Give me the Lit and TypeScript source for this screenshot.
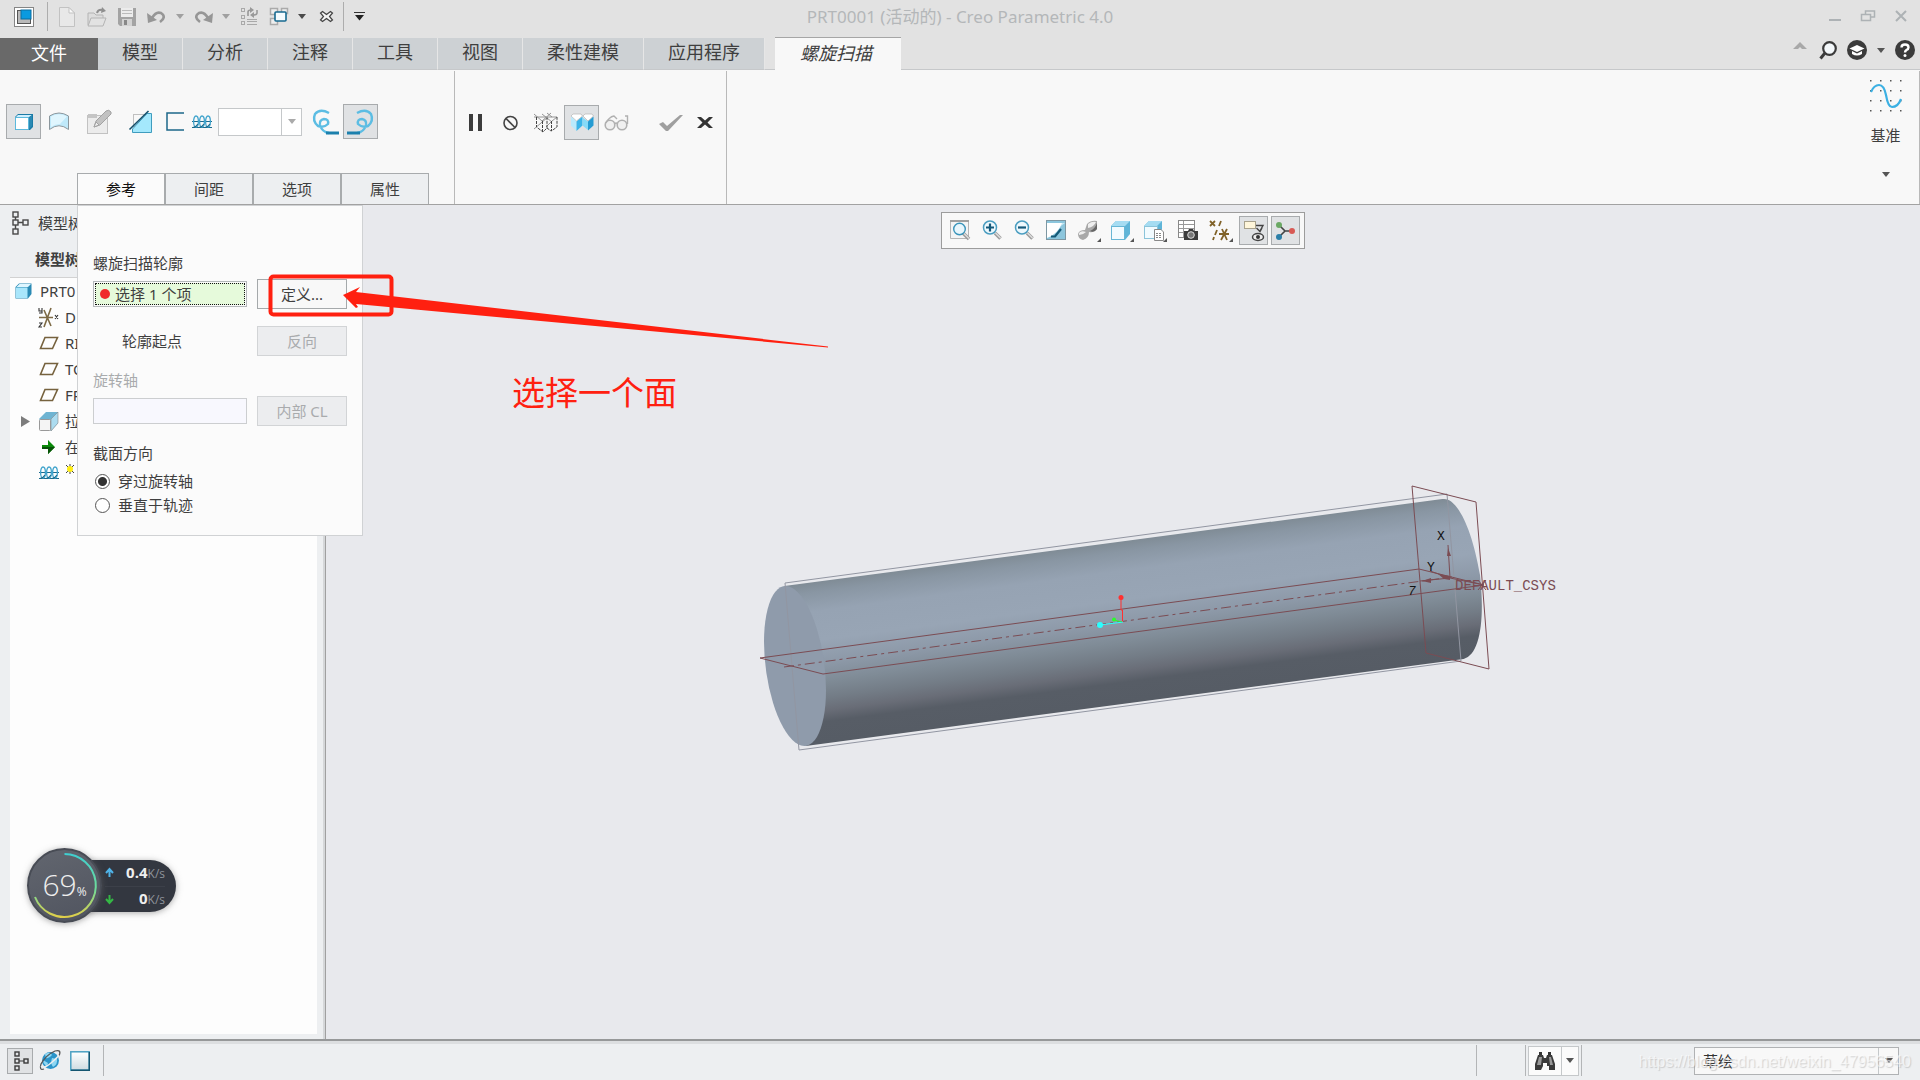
import { LitElement, html, css, svg, TemplateResult } from "lit";
import { customElement, state } from "lit/decorators.js";
import { classMap } from "lit/directives/class-map.js";

type Icon = TemplateResult;

const icon = (w: number, h: number, body: unknown): Icon =>
  html`<svg class="ic" width=${w} height=${h} viewBox="0 0 ${w} ${h}" aria-hidden="true">${body}</svg>`;

const caret = (color: string, w = 8): Icon =>
  icon(w, 5, svg`<path d="M0 0H${w}L${w / 2} 5Z" fill=${color}/>`);

const coil = (w: number): Icon =>
  icon(w, 14, svg`<g fill="none" stroke="#1b6a8c">
    <path d="M0 12.500H${w}M0 6.500H${w}" stroke-width="1"/>
    <g stroke="#3fa3cc" stroke-width="1.300"><ellipse cx="4" cy="6.500" rx="2.400" ry="5.500"/><ellipse cx="10" cy="6.500" rx="2.400" ry="5.500"/><ellipse cx="16" cy="6.500" rx="2.400" ry="5.500"/></g>
    <path d="M1 12.500Q4 12 6 9M7 12.500Q10 12 12 9M13 12.500Q16 12 18 9" stroke-width="1.200"/></g>`);

const ICONS = {
  app: icon(20, 20, svg`<rect x=".5" y=".5" width="19" height="19" fill="#fff" stroke="#858585"/>
    <rect x="3.500" y="3.500" width="13" height="13" fill="#ddd" stroke="#555"/><path d="M4 4h4v12H4zM4 12h12v4H4z" fill="#b9b9b9"/><rect x="7" y="3" width="10" height="9" fill="#0a9ae0" stroke="#0b6d9f"/>`),
  fresh: icon(18, 20, svg`<path d="M1.500 .5H11L16.500 6V19.500H1.500Z" fill="#e8e8e8" stroke="#c2c2c2"/><path d="M11 .5V6H16.500Z" fill="#fafafa" stroke="#c2c2c2"/>`),
  open: icon(20, 20, svg`<path d="M1 18V6H7L9 8H16V11" fill="#ddd" stroke="#b4b4b4"/><path d="M1 19L4 11H19L16 19Z" fill="#e2e2e2" stroke="#b4b4b4"/><path d="M10 6Q11 2 16 3" fill="none" stroke="#8f8f8f" stroke-width="2"/><path d="M15 0L19 4L14 6Z" fill="#8f8f8f"/>`),
  save: icon(20, 20, svg`<path d="M1 1H19V19H3L1 17Z" fill="#a3a3a3"/><rect x="4" y="1" width="12" height="9" fill="#ececec"/><path d="M5 3.500H15M5 6.500H15" stroke="#bbb"/><rect x="5" y="12" width="10" height="7" fill="#d2d2d2"/><rect x="7" y="13" width="3" height="5" fill="#888"/>`),
  undo: icon(20, 16, svg`<path d="M5 9Q9 2 14 4Q20 8 13 13" fill="none" stroke="#969696" stroke-width="2.600"/><path d="M0 4L1 14L10 11Z" fill="#969696"/>`),
  redo: icon(20, 16, svg`<path d="M15 9Q11 2 6 4Q0 8 7 13" fill="none" stroke="#969696" stroke-width="2.600"/><path d="M20 4L19 14L10 11Z" fill="#969696"/>`),
  regen: icon(19, 19, svg`<g fill="none" stroke="#a9a9a9"><rect x="1.500" y="1.500" width="3" height="3"/><rect x="1.500" y="8.500" width="3" height="3"/><rect x="1.500" y="14.500" width="3" height="3"/><path d="M7 12.500H17M7 14.500H17M7 17.500H17"/></g><path d="M8 9L8 5Q8 3 11 3M17 3V6Q17 8 13 8" fill="none" stroke="#999" stroke-width="1.600"/><path d="M10 0L14 3L10 6ZM14 5L10 8L14 11Z" fill="#999"/>`),
  windows: icon(20, 19, svg`<g fill="#eee" stroke="#aaa" stroke-width="1.500"><rect x="1.500" y="1.500" width="7" height="6"/><rect x="12.500" y="1.500" width="6" height="5"/><rect x="1.500" y="11.500" width="7" height="6"/></g><rect x="6" y="5" width="11" height="9" rx="1" fill="#f4fbfe" stroke="#176a90" stroke-width="1.600"/>`),
  closeDoc: icon(15, 13, svg`<path d="M3.500 1.500L7.500 4.500L11.500 1.500L13.500 3L10.500 6.500L13.500 10L11.500 11.500L7.500 8.500L3.500 11.500L1.500 10L4.500 6.500L1.500 3Z" fill="#f4f4f4" stroke="#444" stroke-width="1.200"/>`),
  more: icon(11, 9, svg`<path d="M0 .5H11" stroke="#333"/><path d="M1 3H10L5.500 8.500Z" fill="#222"/>`),
  solid: icon(20, 18, svg`<path d="M1 4L4 1H19V14L16 17H1Z" fill="#1b7ba6"/><path d="M1.500 4.500H14.500V16.500H1.500Z" fill="#fff" stroke="#5db9dc"/><path d="M2 4L4 2H18L15 4Z" fill="#cdefff"/><path d="M15 5L18 2V13L15 16Z" fill="#2a8ab4"/>`),
  surface: icon(22, 19, svg`<path d="M1.500 4Q11 -2 20.500 4V17.500Q11 10 1.500 17.500Z" fill="#bfe9fa" stroke="#8c979d"/><path d="M3 4.500Q11 0 19 4.500L12 12Q7 12 3 15Z" fill="#e8f9ff" opacity=".8"/>`),
  pencil: icon(27, 26, svg`<rect x="1.500" y="6.500" width="20" height="18" fill="#ececec" stroke="#c2c2c2"/><rect x="2" y="5" width="9" height="4" fill="#c5c5c5"/><path d="M8 18L10 12L20 2Q23 0 25 3Q26 5 23 7L14 16Z" fill="#c2c2c2" stroke="#a2a2a2"/><path d="M8 18L10 13L13 16Z" fill="#eee" stroke="#a2a2a2"/>`),
  cut: icon(23, 24, svg`<rect x="4.500" y="4.500" width="12" height="12" fill="none" stroke="#888" stroke-dasharray="1 1"/><path d="M20 3.500H22.500V22.500H3.500V19L18 3.500Z" fill="#a4e8fc" stroke="#3f9cbe"/><path d="M.5 19.500L19.500 1" stroke="#124f6b" stroke-width="1.600"/>`),
  bracket: icon(18, 19, svg`<path d="M18 1H1V18H18" fill="none" stroke="#1d6789" stroke-width="1.500"/>`),
  coil: coil(20),
  leftHand: icon(27, 26, svg`<g fill="none" stroke="#5cbde3" stroke-width="2.400"><path d="M17 4Q8 -1 3 5Q0 12 6 17Q12 19 16 15Q17 10 12 10Q7 11 8 16Q10 23 17 24"/></g><path d="M14 24H27" stroke="#1c80ad" stroke-width="3"/>`),
  rightHand: icon(27, 26, svg`<g fill="none" stroke="#5cbde3" stroke-width="2.400"><path d="M10 4Q19 -1 24 5Q27 12 21 17Q15 19 11 15Q10 10 15 10Q20 11 19 16Q17 23 10 24"/></g><path d="M0 24H13" stroke="#1c80ad" stroke-width="3"/>`),
  pause: icon(17, 17, svg`<path d="M1 0H5V17H1ZM10 0H14V17H10Z" fill="#3c3c3c"/>`),
  forbid: icon(17, 16, svg`<circle cx="7.500" cy="8" r="6.500" fill="none" stroke="#444" stroke-width="1.600"/><path d="M3 3.500L12 12.500" stroke="#444" stroke-width="1.600"/>`),
  wire: icon(25, 20, svg`<g fill="none" stroke="#8a8a8a" stroke-width=".9"><path d="M0 4H23M0 1L8 8M8 8L17 0M8 1L18 9M13 0L18 4M23 4L18 8M0 16L14 4M18 8L12 14"/></g><g fill="none" stroke="#444" stroke-dasharray="3 1"><path d="M2.500 4V14L9 19L13 15V5M8.500 8V19M17.500 8V18L23 14V4M13 15L17 18"/></g>`),
  shade: icon(24, 18, svg`<path d="M1 2L3 0H11L12.500 2L6.500 7ZM13 2L15 0H22L23.500 2L18 7Z" fill="#fff" stroke="#b5b5b5" stroke-width=".7"/><path d="M1 2.500L6.500 7.500V17L1 11.500Z" fill="#b9eafd"/><path d="M6.500 7.500L12.500 2.500V11.500L6.500 17Z" fill="#3bb4e8"/><path d="M12.500 3.500L18 7.500V16L12.500 11.500Z" fill="#86daf8"/><path d="M18 7.500L23.500 2.500V11.500L18 16.500Z" fill="#249bd2"/>`),
  glasses: icon(25, 16, svg`<g fill="#f0f0f0" stroke="#b0b0b0" stroke-width="1.600"><circle cx="6" cy="10" r="4.800"/><circle cx="18" cy="10" r="4.800"/></g><path d="M2 8Q5 2 10 1L13 4M11 9Q12 7 13.500 9M23.500 9V1H21" fill="none" stroke="#b0b0b0" stroke-width="1.400"/>`),
  check: icon(26, 18, svg`<path d="M1 10L5 8L9 12L22 1H25L10 17H8Z" fill="#9f9f9f"/>`),
  cancel: icon(18, 11, svg`<path d="M0 0H4L8 3.500L12 0H16L10.500 5.500L16 11H12L8 7.500L4 11H0L5.500 5.500Z" fill="#333"/>`),
  minimize: icon(12, 14, svg`<path d="M0 11H12" stroke="#adb2b5" stroke-width="2"/>`),
  restore: icon(14, 12, svg`<g fill="none" stroke="#adb2b5"><path d="M4.500 4V1H13.500V7H10" stroke-width="1.500"/><path d="M.5 4.500H9.500V10.500H.5Z" stroke-width="1.500"/></g>`),
  close: icon(12, 12, svg`<path d="M1 1L11 11M11 1L1 11" stroke="#adb2b5" stroke-width="2"/>`),
  collapse: icon(14, 8, svg`<path d="M0 7L7 0L14 7H9L7 5L5 7Z" fill="#a8a8a8"/>`),
  search: icon(18, 19, svg`<circle cx="10.500" cy="7.500" r="6.300" fill="#f4f8fb" stroke="#3b3b3b" stroke-width="2.200"/><path d="M6 12L1.500 17.500" stroke="#3b3b3b" stroke-width="3"/>`),
  learn: icon(20, 20, svg`<circle cx="10" cy="10" r="10" fill="#3b3b3b"/><path d="M2.500 8.500L10 5L17.500 8.500L10 12Z" fill="#fff"/><path d="M5 11V14Q10 17 15 14V11L10 13.500Z" fill="#fff"/>`),
  help: icon(20, 20, svg`<circle cx="10" cy="10" r="10" fill="#3b3b3b"/><path d="M6.500 7.500Q6.500 4.500 10 4.500Q13.500 4.500 13.500 7.500Q13.500 9 11.500 10Q10 11 10 12.500" fill="none" stroke="#fff" stroke-width="2.400"/><circle cx="10" cy="15.500" r="1.500" fill="#fff"/>`),
  datum: icon(32, 32, svg`<g fill="#555">${[0, 10, 20, 30].map((y) => [0, 10, 20, 30].map((x) => svg`<rect x=${x} y=${y} width="1.500" height="1.500"/>`))}</g><path d="M1 12Q4 5 9 5Q14 5 16 15Q18 27 22 27Q28 27 31 19" fill="none" stroke="#3bb0e3" stroke-width="2.200"/>`),
  tree: icon(17, 24, svg`<g fill="none" stroke="#484848" stroke-width="1.400"><rect x="1" y="1" width="5" height="5"/><rect x="1" y="9" width="5" height="5"/><rect x="1" y="18" width="5" height="5"/><rect x="11" y="9" width="5" height="5"/><path d="M3.500 6V9M6 11.500H11M3.500 14V18"/></g>`),
  part: icon(17, 16, svg`<path d="M.5 4L4 .5H16.500V11L13 15.500H.5Z" fill="#2a8ab4"/><path d="M1 4.500H12.500V15H1Z" fill="#a9e6fb"/><path d="M1.500 4L4.500 1H16L13 4Z" fill="#def6ff"/>`),
  csys: icon(21, 21, svg`<path d="M1 10.500H15M6 3L13 19M13 1L6 20" stroke="#7d6a45" stroke-width="1.600"/><g fill="none" stroke="#333" stroke-width="1.100"><path d="M1 1V4H4M4 1V6H1M17 8L20 12M20 8L17 12M1 16H4L1 20H4"/></g>`),
  plane: icon(20, 14, svg`<path d="M6 1.500H18.500L13.500 12.500H1.500Z" fill="none" stroke="#76623e" stroke-width="1.600"/>`),
  extrude: icon(21, 21, svg`<path d="M1 8L8 1H20V12L13 20Z" fill="#6fb4d2"/><path d="M13 8L20 1V12L13 20Z" fill="#acdcf0" stroke="#888" stroke-width=".6"/><rect x="1.500" y="8.500" width="11" height="11" rx="1" fill="#f4f4f4" stroke="#999"/>`),
  insert: icon(13, 14, svg`<path d="M0 5H6V0L13 7L6 14V9H0Z" fill="#0a8a0a"/><path d="M0 7H13L6 14V9H0Z" fill="#075307"/>`),
  globe: icon(21, 21, svg`<circle cx="10.500" cy="10.500" r="8.500" fill="#2b94c9"/><path d="M5 4Q10 1 12 5Q9 9 6 8ZM12 8L17 9Q18 14 13 17Q10 13 12 8ZM3 10L8 13L7 16Q3 14 3 10Z" fill="#8ed7f3"/><path d="M4 19Q-1 21 1 14Q6 5 15 1Q22 -1 19 6" fill="none" stroke="#555" stroke-width="1.300"/><path d="M1 16Q4 19 11 13T19 5" fill="none" stroke="#eee" stroke-width="1.600"/>`),
  blank: icon(20, 20, svg`<defs><linearGradient id="pane" x1="0" y1="0" x2="0" y2="1"><stop offset="0" stop-color="#fff"/><stop offset="1" stop-color="#cfdbe1"/></linearGradient></defs><rect x=".8" y=".8" width="18.400" height="18.400" fill="url(#pane)" stroke="#4a9fc2" stroke-width="1.500"/><path d="M1 19.300H19.300V1" fill="none" stroke="#155570" stroke-width="1.400"/>`),
  binoculars: icon(20, 18, svg`<path d="M4 0H7V3H4ZM13 0H16V3H13Z" fill="#333"/><path d="M3 3H8L9 6H11L12 3H17L20 12V18H14V14H12V11H8V14L6 18H0V12Z" fill="#3a3a3a"/><path d="M4 5L2 13H6L7 5ZM14 5L15 13H18L16 5Z" fill="#999"/>`),
};

const lens = svg`<path d="M13 13L18.500 18.500" stroke="#9a9a9a" stroke-width="3.600"/><path d="M13.500 13L18.500 18" stroke="#dcdcdc" stroke-width="1.600"/><circle cx="8" cy="7.500" r="6.500" fill="#edf8fd" stroke="#4a9dc0" stroke-width="1.500"/>`;
const corner = svg`<path d="M24 18V22H20Z" fill="#555"/>`;

interface ViewTool { label: string; art: Icon; wide?: boolean; pressed?: boolean }

const VIEW_TOOLS: ViewTool[] = [
  { label: "重新调整", art: icon(21, 21, svg`<path d="M.5 18.500V.5H18.500V18.500Z" fill="#f4f4f4" stroke="#b5b5b5"/><path d="M0 1H19" stroke="#a0a0a0" stroke-width="2"/><path d="M13 13L19 19" stroke="#9a9a9a" stroke-width="3.500"/><path d="M13.500 13L19 18.500" stroke="#ddd" stroke-width="1.400"/><circle cx="9.500" cy="9" r="5.800" fill="#e8f6fc" stroke="#3a94ba" stroke-width="1.400"/>`) },
  { label: "放大", art: icon(21, 21, svg`${lens}<path d="M4 7.500H12M8 3.500V11.500" stroke="#14597a" stroke-width="2.200"/>`) },
  { label: "缩小", art: icon(21, 21, svg`${lens}<path d="M4 7.500H12" stroke="#14597a" stroke-width="2.200"/>`) },
  { label: "重画", art: icon(21, 21, svg`<rect x=".5" y=".5" width="19" height="19" fill="#8cc6dd" stroke="#7e97a2"/><path d="M1 3H19L1 16Z" fill="#c9e8f3"/><path d="M1 3H16Q12 14 1 18Z" fill="#fff"/><path d="M5 16.500H9L15 9" fill="none" stroke="#155a78" stroke-width="2.200"/>`) },
  { label: "渲染", wide: true, art: icon(24, 22, svg`<path d="M10 4Q14 0 20 1V9Q17 13 12 12Q12 18 6 20Q1 19 1 14Q2 10 8 10Z" fill="#a8a8a8"/><path d="M11 4Q15 1 19 2Q17 7 11 8ZM2 13Q4 10 9 12Q6 15 2 15Z" fill="#eee"/><path d="M20 3V9Q17 13 13 11Q18 9 20 3Z" fill="#666"/>${corner}`) },
  { label: "显示样式", wide: true, art: icon(24, 22, svg`<path d="M1 6L6 1H20V14L15 20Z" fill="#5fb5d8"/><path d="M1 6L6 1H20L15 6Z" fill="#a5dcf2"/><rect x="1.500" y="6.500" width="13" height="13" fill="#f2fbff" stroke="#67b7d6"/>${corner}`) },
  { label: "已保存方向", wide: true, art: icon(24, 22, svg`<path d="M1 6L6 1H19V12L14 18Z" fill="#5fb5d8"/><path d="M1 6L6 1H19L14 6Z" fill="#a5dcf2"/><rect x="1.500" y="6.500" width="13" height="12" fill="#f2fbff" stroke="#8bc4da"/><path d="M11.500 9.500H18L20.500 12V20.500H11.500Z" fill="#fff" stroke="#888"/><path d="M13 13.500H19M13 15.500H19M13 17.500H19" stroke="#888" stroke-dasharray="2 1"/>${corner}`) },
  { label: "视图管理器", wide: true, art: icon(20, 21, svg`<rect x=".5" y=".5" width="16" height="17" fill="#fff" stroke="#888"/><path d="M1 4.500H16M1 8.500H16M1 12.500H9M5.500 1V17" stroke="#999"/><path d="M6 11H10L11 9H15L16 11H20V20H6Z" fill="#3c3c3c"/><circle cx="13" cy="15" r="3.300" fill="#777" stroke="#ddd"/>`) },
  { label: "基准显示", wide: true, art: icon(24, 22, svg`<g stroke="#806228" stroke-width="1.800" fill="none"><path d="M1 1L6 6M6 1L1 6"/><path d="M12 1L10 6M8 10L6 15M5 17L4 20"/><path d="M10 14H20M13 9L18 20M18 9L12 20"/></g>${corner}`) },
  { label: "注释显示", pressed: true, art: icon(22, 22, svg`<rect x="1.500" y="1.500" width="11" height="7" fill="#fff6da" stroke="#a9a28c"/><path d="M13 5.500H20L17 11M13.500 8L17 11.500L19 8" fill="none" stroke="#444" stroke-width="1.400"/><ellipse cx="15" cy="17" rx="5.500" ry="3.500" fill="#eee" stroke="#444" stroke-width="1.500"/><circle cx="15" cy="17" r="2" fill="#333"/>`) },
  { label: "旋转中心", pressed: true, art: icon(22, 20, svg`<path d="M4 4L10 10L4 16M10 10H18" fill="none" stroke="#444" stroke-width="1.600"/><circle cx="4" cy="4" r="3" fill="#6aa863"/><circle cx="4" cy="16" r="3" fill="#2b7fa8"/><circle cx="17" cy="10" r="3" fill="#d85a54"/>`) },
];

const TREE = [
  { art: ICONS.csys, text: "D" },
  { art: ICONS.plane, text: "RI" },
  { art: ICONS.plane, text: "TO" },
  { art: ICONS.plane, text: "FR" },
  { art: ICONS.extrude, text: "拉", parent: true },
  { art: ICONS.insert, text: "在" },
];

const base = css`
  * { box-sizing: border-box; }
  button, select, input { font: inherit; color: inherit; margin: 0; padding: 0; border: 0; background: none; border-radius: 0; }
  select, input { appearance: none; outline: none; }
  .ic { display: block; flex: none; overflow: visible; }
`;

@customElement("reference-panel")
class ReferencePanel extends LitElement {
  @state() private direction = "axis";

  static styles = [base, css`
    :host { display: block; width: 286px; padding: 47px 15px 18px; background: #fbfbfb; border: 1px solid #d0d2d4; line-height: 20px; }
    .row { display: grid; grid-template-columns: 154px 90px; gap: 10px; align-items: center; height: 30px; }
    .title { display: block; margin-bottom: 6px; }
    .muted { color: #a9abad; }
    .start { padding-left: 29px; }
    .gap { margin-top: 17px; }
    .gap-s { margin-top: 14px; }
    .field { height: 26px; border: 1px solid #b4b8ba; padding: 1px; display: flex; }
    .pick { display: flex; align-items: center; gap: 5px; flex: 1; background: #e6fadb; border: 1px dotted #111; padding-left: 4px; min-width: 0; }
    .dot { width: 10px; height: 10px; border-radius: 50%; background: #f02b2b; flex: none; }
    .pick input { flex: 1; min-width: 0; height: 20px; }
    .axis { height: 26px; border: 1px solid #ccced0; background: #f8f8fe; width: 100%; }
    .btn { height: 30px; border: 1px solid #a5a9ab; background: #f8f8f8; }
    .btn:disabled { background: #ecedef; border-color: #d2d4d6; color: #a9abad; }
    .radio { display: flex; align-items: center; gap: 8px; height: 24px; padding-left: 2px; }
    .radio input { width: 15px; height: 15px; border: 1px solid #555; border-radius: 50%; background: #fff; }
    .radio input:checked { background: radial-gradient(circle, #333 0 4px, #fff 5px); }
  `];

  render() {
    const pick = (v: string) => () => (this.direction = v);
    return html`
      <label class="title" for="profile">螺旋扫描轮廓</label>
      <div class="row">
        <div class="field"><div class="pick"><span class="dot"></span><input id="profile" readonly value="选择 1 个项" /></div></div>
        <button class="btn">定义...</button>
      </div>
      <div class="row gap"><span class="start">轮廓起点</span><button class="btn" disabled>反向</button></div>
      <label class="title muted gap-s" for="axis">旋转轴</label>
      <div class="row"><input id="axis" class="axis" disabled /><button class="btn" disabled>内部 CL</button></div>
      <div class="title gap">截面方向</div>
      <label class="radio"><input type="radio" name="dir" .checked=${this.direction === "axis"} @change=${pick("axis")} />穿过旋转轴</label>
      <label class="radio"><input type="radio" name="dir" .checked=${this.direction === "normal"} @change=${pick("normal")} />垂直于轨迹</label>
    `;
  }
}

@customElement("model-view")
class ModelView extends LitElement {
  static styles = css`
    :host { display: block; position: absolute; inset: 0; }
    .scene { display: block; width: 100%; height: 100%; }
    .datum { fill: none; stroke: #7b4c53; stroke-width: 1; }
    .edge { fill: none; stroke: #9296a2; stroke-width: 1; }
    .mono { font: 14px "Liberation Mono", monospace; fill: #7b4c53; }
    .axis { fill: #111; font-size: 13px; }
    .slant { font-style: italic; }
  `;

  render() {
    return html`<svg class="scene" viewBox="326 205 1594 834" preserveAspectRatio="xMidYMid meet" role="img" aria-label="圆柱模型">
      <defs>
        <linearGradient id="body" gradientUnits="userSpaceOnUse" x1="795" y1="585" x2="816" y2="744">
          <stop offset="0" stop-color="#808c96"/><stop offset=".06" stop-color="#8996a3"/><stop offset=".18" stop-color="#96a3b3"/>
          <stop offset=".36" stop-color="#98a5b5"/><stop offset=".5" stop-color="#8d99a8"/><stop offset=".62" stop-color="#7f8b96"/>
          <stop offset=".72" stop-color="#737c86"/><stop offset=".8" stop-color="#696d77"/><stop offset=".87" stop-color="#575d66"/><stop offset="1" stop-color="#565c65"/>
        </linearGradient>
      </defs>
      <path class="body" fill="url(#body)" d="M784.300 586.100L1442.300 499.100C1456 496 1472 527 1480 575C1485 620 1480 655 1463.700 658.900L805.700 745.900Z"/>
      <circle r="1" transform="matrix(31 24 0 76.300 795 666)" fill="#8f9bab"/>
      <path class="edge" d="M785 583L1447 494L1461 661L799 750Z"/>
      <path class="datum" d="M760 658L1419 569L1484 585L823 674Z"/>
      <path class="datum" d="M784 667L1452 577" stroke-dasharray="10 4 3 4"/>
      <path class="datum" d="M1412 486L1476 502L1489 669L1426 653Z"/>
      <path class="datum" d="M1450 578L1448 545M1450 578L1420 581M1450 578L1430 571M1450 578L1484 585M1478 580L1486 590M1486 580L1478 590"/>
      <path fill="#7b4c53" d="M1448 548L1451 556H1447ZM1422 581L1431 578V583ZM1438 574L1450 576V580L1444 579Z"/>
      <text class="mono axis" x="1437" y="540">X</text>
      <text class="mono axis" x="1427" y="571">Y</text>
      <text class="mono axis slant" x="1408" y="595">7</text>
      <text class="mono" x="1455" y="590">DEFAULT_CSYS</text>
      <g fill="none"><path d="M1121 598V610H1122.500V622" stroke="#ff3030"/><path d="M1122 622L1114 620" stroke="#2aff2a"/><path d="M1123 622L1100 625" stroke="#2affff"/></g>
      <circle cx="1121" cy="597.500" r="2.500" fill="#ff3030"/><circle cx="1114" cy="619.500" r="2" fill="#2aff2a"/><circle cx="1100" cy="625" r="3" fill="#2affff"/>
    </svg>`;
  }
}

@customElement("net-gauge")
class NetGauge extends LitElement {
  static styles = [base, css`
    :host { position: absolute; display: flex; align-items: center; color: #eee; font-family: "Open Sans", "Noto Sans", sans-serif; }
    .dial { position: relative; width: 75px; height: 75px; border-radius: 50%; background: linear-gradient(160deg, #62666f, #50545f); border: 2px solid #484c55; box-shadow: 0 1px 6px #6668; display: flex; align-items: baseline; justify-content: center; z-index: 1; }
    .num { font-size: 30px; line-height: 70px; font-weight: 300; }
    .pct { font-size: 12px; }
    .arc { position: absolute; inset: 0; }
    .pill { width: 111px; height: 52px; margin-left: -37px; padding: 0 11px 0 40px; background: #333740; border-radius: 0 26px 26px 0; box-shadow: 0 1px 6px #6668; }
    .rate { display: flex; align-items: center; justify-content: space-between; height: 26px; font-size: 15px; font-weight: 700; }
    .rate + .rate { border-top: 1px solid #3c4049; }
    .unit { font-weight: 400; font-size: 12px; color: #8f939b; }
  `];

  render() {
    const arrow = (c: string, d: string) => icon(9, 9, svg`<path d=${d} fill="none" stroke=${c} stroke-width="2"/>`);
    return html`
      <div class="dial">
        <svg class="arc" viewBox="0 0 71 71"><defs><linearGradient id="a" x1="0" y1="0" x2="0" y2="1"><stop offset="0" stop-color="#3fcfd0"/><stop offset=".55" stop-color="#6fdc9a"/><stop offset="1" stop-color="#e0cf4a"/></linearGradient></defs>
          <path d="M35.500 4A31.500 31.500 0 1 1 6 47" fill="none" stroke="url(#a)" stroke-width="2"/></svg>
        <span class="num">69</span><span class="pct">%</span>
      </div>
      <div class="pill">
        <div class="rate">${arrow("#4fb3e8", "M4.500 9V2M1 5L4.500 1L8 5")}<span>0.4<span class="unit">K/s</span></span></div>
        <div class="rate">${arrow("#35b845", "M4.500 0V7M1 4L4.500 8L8 4")}<span>0<span class="unit">K/s</span></span></div>
      </div>`;
  }
}

@customElement("app-root")
class AppRoot extends LitElement {
  @state() private tab = "螺旋扫描";
  @state() private sub = "参考";

  static styles = [base, css`
    :host { display: flex; flex-direction: column; min-height: 100vh; position: relative; overflow: hidden; background: #edeff1; color: #3f3f3f;
      font-family: "Noto Sans", "Noto Sans CJK SC", sans-serif; font-size: 15px; line-height: 20px; }
    .slot { display: flex; align-items: center; justify-content: center; flex: none; }
    .sep { width: 1px; background: #adadad; flex: none; }

    .titlebar { display: grid; grid-template-columns: 1fr auto 1fr; height: 37px; background: #e2e2e2; }
    .quick { display: flex; padding-bottom: 4px; }
    .quick .sep { margin: 2px 0; }
    .quick .slot { width: 30px; }
    .quick .home { width: 47px; }
    .quick .drop { width: 16px; }
    .quick .files { display: flex; padding: 0 0 0 4px; }
    .quick .files .slot:last-child { width: 33px; }
    .doc { font-size: 17px; line-height: 34px; color: #b4b7b9; }
    .window { display: flex; justify-content: flex-end; padding: 0 3px 5px 0; }
    .window .slot { width: 33px; }

    .tabbar { display: flex; align-items: stretch; height: 33px; background: linear-gradient(#e2e2e2 32px, #c6c8ca 32px); }
    .tab { font-size: 18px; line-height: 28px; padding: 0 24px 3px; background: #cdd1d4; border-right: 1px solid #e6e6e6; border-bottom: 1px solid #c6c8ca; margin-top: 1px; }
    .file { background: #696969; color: #fff; padding: 0 31px 3px; border: 0; }
    .current { background: #f8f8f8; border: 0; border-top: 1px solid #a6a6a6; padding: 0 29px 3px 25px; margin: 0 0 0 10px; font-style: italic; }
    .help { display: flex; margin-left: auto; align-items: center; padding: 0 5px 7px 0; gap: 10px; }
    .help .slot { height: 20px; }
    .help .up { padding: 2px 2px 0 0; align-items: flex-start; }

    .ribbon { display: flex; height: 135px; background: #f8f8f8; border-bottom: 1px solid #a2a2a2; }
    .group { display: flex; flex-direction: column; justify-content: space-between; border-right: 1px solid #b9b9b9; padding-top: 33px; margin-top: 1px; }
    .main { width: 455px; }
    .control { width: 272px; }
    .tools { display: flex; align-items: center; gap: 6px; padding-left: 6px; }
    .control .tools { gap: 0; padding: 1px 0 0 4px; }
    .pair { display: flex; }
    .tool { width: 35px; height: 35px; }
    .thin { width: 22px; }
    .on { background: #e0e2e4; border: 1px solid #a8abad; }
    .ok { margin-left: 19px; }
    .combo { position: relative; display: flex; border: 1px solid #c5c8ca; background: #fff; }
    .combo .pull { position: absolute; top: 0; right: 0; bottom: 0; width: 20px; display: flex; align-items: center; justify-content: center; border-left: 1px solid #c5c8ca; pointer-events: none; }
    .pitch { width: 84px; height: 28px; }
    .combo select { width: 100%; height: 100%; }
    .subtabs { display: flex; padding-left: 77px; }
    .sub { width: 88px; height: 31px; border: 1px solid #a8abad; border-bottom: 0; background: #edeff1; }
    .sub.sel { background: #fbfbfb; color: #111; }
    .datum { margin-left: auto; width: 60px; align-items: center; justify-content: flex-start; padding: 9px 8px 0 0; }
    .datum .lab { display: flex; flex-direction: column; align-items: center; gap: 13px; }
    .datum .lab .ic:last-child { margin-top: 14px; }

    .work { display: flex; flex: 1; position: relative; }
    .side { width: 326px; display: flex; flex-direction: column; padding: 0 8px 5px 10px; background: #edeff1; border-right: 1px solid #a0a0a0; box-shadow: inset -2px 0 #d5d7d9; }
    .head { display: flex; align-items: center; gap: 9px; height: 36px; padding-left: 2px; }
    .bold { height: 36px; padding: 8px 0 0 25px; font-weight: 700; }
    .tree { flex: 1; background: #fdfdfd; border-top: 1px solid #d2d2d2; margin: 0; padding: 0; list-style: none; }
    .node { display: flex; align-items: center; height: 26px; padding-left: 28px; gap: 6px; position: relative; }
    .node .art { width: 21px; display: flex; justify-content: center; }
    .root { padding-left: 5px; gap: 8px; }
    .twist { position: absolute; left: 11px; }
    .star { align-self: flex-start; padding-top: 4px; }

    .canvas { flex: 1; position: relative; background: #e8e9ed; display: flex; justify-content: center; align-items: flex-start; }
    .viewbar { position: relative; display: flex; gap: 3px; margin-top: 7px; padding: 3px 4px; border: 1px solid #9c9c9c; background: #f8f8f8; }
    .view { width: 29px; height: 29px; }
    .view.wide { width: 30px; }
    .popup { position: absolute; top: 0; left: 77px; }
    net-gauge { left: 27px; bottom: 116px; }

    .status { display: flex; align-items: center; height: 41px; padding: 0 21px 0 7px; border-top: 2px solid #969899; background: #edeff1; box-shadow: inset 0 3px #dcdee0; gap: 7px; }
    .status .sep { height: 31px; background: #b3b5b7; }
    .pane { width: 26px; height: 26px; }
    .globe { width: 21px; }
    .square { width: 20px; margin: 0 6px 0 2px; }
    .spacer { flex: 1; }
    .find { display: flex; border: 1px solid #c5c8ca; background: #fbfbfb; height: 30px; }
    .find .slot { width: 32px; }
    .find .drop { width: 17px; border-left: 1px solid #c5c8ca; }
    .finder { display: flex; gap: 2px; align-items: center; margin: 0 105px 0 41px; }
    .filter { width: 205px; height: 28px; border-color: #b0b2b4; background: #f8f8f8; }
    .filter select { padding-left: 8px; color: #333; line-height: 24px; }
    .mark { position: absolute; right: 9px; bottom: 8px; font: 16px/20px "Liberation Sans", sans-serif; color: #fff9; text-shadow: 1px 1px 1px #9996; pointer-events: none; }

    .note { position: absolute; left: 260px; top: 265px; width: 580px; height: 160px; pointer-events: none; overflow: visible; }
    .note text { font: 33px "Noto Sans CJK SC", sans-serif; fill: #ff2010; }
  `];

  private tool(label: string, art: Icon, cls = "") {
    return html`<button class="slot ${cls}" aria-label=${label} title=${label}>${art}</button>`;
  }

  private tabButton(name: string) {
    return html`<button class=${classMap({ tab: true, current: name === "螺旋扫描" })} aria-pressed=${this.tab === name} @click=${() => (this.tab = name)}>${name}</button>`;
  }

  render() {
    return html`
      <header class="titlebar">
        <div class="quick">
          ${this.tool("窗口", ICONS.app, "home")}<span class="sep"></span>
          <div class="files">
            ${this.tool("新建", ICONS.fresh)}${this.tool("打开", ICONS.open)}${this.tool("保存", ICONS.save)}
            ${this.tool("撤消", ICONS.undo)}${this.tool("撤消列表", caret("#a0a0a0"), "drop")}
            ${this.tool("重做", ICONS.redo)}${this.tool("重做列表", caret("#a0a0a0"), "drop")}
            ${this.tool("重新生成", ICONS.regen)}${this.tool("窗口切换", ICONS.windows)}${this.tool("窗口列表", caret("#4a4a4a"), "drop")}
            ${this.tool("关闭", ICONS.closeDoc)}
          </div>
          <span class="sep"></span>${this.tool("自定义", ICONS.more)}
        </div>
        <div class="doc">PRT0001 (活动的) - Creo Parametric 4.0</div>
        <div class="window">${this.tool("最小化", ICONS.minimize)}${this.tool("还原", ICONS.restore)}${this.tool("关闭窗口", ICONS.close)}</div>
      </header>

      <nav class="tabbar">
        <button class="tab file">文件</button>
        ${["模型", "分析", "注释", "工具", "视图", "柔性建模", "应用程序", "螺旋扫描"].map((n) => this.tabButton(n))}
        <div class="help">
          ${this.tool("最小化功能区", ICONS.collapse, "up")}${this.tool("搜索", ICONS.search)}
          ${this.tool("学习", ICONS.learn)}${this.tool("更多", caret("#555"))}${this.tool("帮助", ICONS.help)}
        </div>
      </nav>

      <section class="ribbon">
        <div class="group main">
          <div class="tools">
            <div class="pair">${this.tool("实体", ICONS.solid, "tool on")}${this.tool("曲面", ICONS.surface, "tool")}</div>
            ${this.tool("草绘", ICONS.pencil, "tool")}${this.tool("移除材料", ICONS.cut, "tool")}${this.tool("薄板", ICONS.bracket, "thin")}
            ${ICONS.coil}
            <div class="combo pitch"><select aria-label="间距值"><option></option></select><span class="pull">${caret("#aaa")}</span></div>
            <div class="pair">${this.tool("左手定则", ICONS.leftHand, "tool")}${this.tool("右手定则", ICONS.rightHand, "tool on")}</div>
          </div>
          <div class="subtabs">
            ${["参考", "间距", "选项", "属性"].map((n) => html`<button class=${classMap({ sub: true, sel: this.sub === n })} @click=${() => (this.sub = n)}>${n}</button>`)}
          </div>
        </div>
        <div class="group control">
          <div class="tools">
            ${this.tool("暂停", ICONS.pause, "tool")}${this.tool("无预览", ICONS.forbid, "tool")}${this.tool("分离", ICONS.wire, "tool")}
            ${this.tool("连接", ICONS.shade, "tool on")}${this.tool("预览", ICONS.glasses, "tool")}
            ${this.tool("确定", ICONS.check, "tool ok")}${this.tool("取消", ICONS.cancel, "tool")}
          </div>
        </div>
        <div class="group datum"><button class="lab">${ICONS.datum}<span>基准</span>${caret("#555")}</button></div>
      </section>

      <main class="work">
        <aside class="side">
          <div class="head">${ICONS.tree}<span>模型树</span></div>
          <div class="bold">模型树</div>
          <ul class="tree">
            <li class="node root">${ICONS.part}<span>PRT0</span></li>
            ${TREE.map((n) => html`<li class="node">${n.parent ? html`<span class="twist">${icon(9, 11, svg`<path d="M0 0L9 5.500L0 11Z" fill="#7d7d7d"/>`)}</span>` : ""}<span class="art">${n.art}</span><span>${n.text}</span></li>`)}
            <li class="node"><span class="art">${coil(20)}</span><span class="star">${icon(10, 10, svg`<path d="M1 1L9 9M9 1L1 9M5 0V10" stroke="#444"/><circle cx="5" cy="5" r="3" fill="#ffee10"/>`)}</span></li>
          </ul>
        </aside>
        <div class="canvas">
          <model-view></model-view>
          <div class="viewbar" role="toolbar">
            ${VIEW_TOOLS.map((t) => this.tool(t.label, t.art, `view${t.wide ? " wide" : ""}${t.pressed ? " on" : ""}`))}
          </div>
        </div>
        ${this.sub === "参考" ? html`<reference-panel class="popup"></reference-panel>` : ""}
        <net-gauge></net-gauge>
      </main>

      <footer class="status">
        ${this.tool("模型树", icon(14, 20, svg`<g fill="none" stroke="#3a3a3a" stroke-width="1.400"><rect x="2" y="1" width="4" height="4"/><rect x="2" y="8" width="4" height="4"/><rect x="2" y="15" width="4" height="4"/><rect x="11" y="8" width="4" height="4"/><path d="M6 10H11" stroke-width="1"/></g>`), "pane on")}
        ${this.tool("浏览器", ICONS.globe, "globe")}${this.tool("全屏", ICONS.blank, "square")}
        <span class="sep"></span><span class="spacer"></span><span class="sep"></span>
        <div class="finder"><span class="sep"></span>
          <div class="find">${this.tool("查找", ICONS.binoculars)}${this.tool("查找选项", caret("#555"), "drop")}</div>
        <span class="sep"></span></div>
        <div class="combo filter"><select aria-label="选择过滤器"><option>草绘</option></select><span class="pull">${caret("#555")}</span></div>
      </footer>
      <div class="mark">https://blog.csdn.net/weixin_47956540</div>

      <svg class="note" viewBox="260 265 580 160">
        <rect x="270.500" y="276.500" width="121" height="38" rx="3" fill="none" stroke="#ff2010" stroke-width="4"/>
        <path d="M343 295L360 287L356 292L828 346.500V347.500L356 304L358 307L356 308Z" fill="#ff2010"/>
        <text x="512" y="405">选择一个面</text>
      </svg>
    `;
  }
}
